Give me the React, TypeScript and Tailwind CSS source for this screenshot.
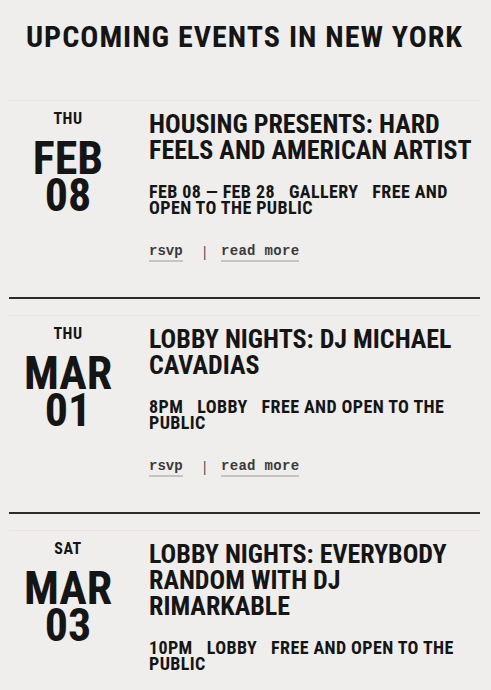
import React from "react";

type Event = {
  day: string;
  month: string;
  date: string;
  title: string;
  meta: string[];
};

const events: Event[] = [
  {
    day: "THU",
    month: "FEB",
    date: "08",
    title: "HOUSING PRESENTS: HARD FEELS AND AMERICAN ARTIST",
    meta: ["FEB 08 — FEB 28", "GALLERY", "FREE AND OPEN TO THE PUBLIC"],
  },
  {
    day: "THU",
    month: "MAR",
    date: "01",
    title: "LOBBY NIGHTS: DJ MICHAEL CAVADIAS",
    meta: ["8PM", "LOBBY", "FREE AND OPEN TO THE PUBLIC"],
  },
  {
    day: "SAT",
    month: "MAR",
    date: "03",
    title: "LOBBY NIGHTS: EVERYBODY RANDOM WITH DJ RIMARKABLE",
    meta: ["10PM", "LOBBY", "FREE AND OPEN TO THE PUBLIC"],
  },
];

function EventRow({ event }: { event: Event }) {
  return (
    <article className="border-b-2 border-[#2b2b2b] pt-[16px] pb-[35px]">
      <div className="border-t border-[#efe3e1] pt-[10px] flex">
        {/* date */}
        <div className="w-[118px] shrink-0 flex flex-col items-center">
          <div className="text-[16px] leading-[16px] font-bold tracking-[0.5px]">{event.day}</div>
          <div className="mt-[13px] text-[46px] leading-[37px] font-bold">{event.month}</div>
          <div className="text-[46px] leading-[37px] font-bold">{event.date}</div>
        </div>
        <div className="ml-[22px] w-[325px]">
          <h2 className="text-[26px] leading-[26px] font-bold">{event.title}</h2>
          <p className="mt-[21px] text-[18px] leading-[16px] font-bold tracking-[0.4px]">
            {event.meta.map((m, i) => (
              <span key={i} className="mr-[14px]">
                {m}
              </span>
            ))}
          </p>
          <div className="mt-[28px] flex items-center font-['Courier_New','Liberation_Mono',monospace] font-stretch-normal text-[14px] leading-[14px] font-bold text-[#3a3a3a]">
            <a className="border-b-2 border-[#c4c4c4] pb-[2px]">rsvp</a>
            <span className="ml-[18px] mr-[12px] font-normal text-[#555]">|</span>
            <a className="border-b-2 border-[#c4c4c4] pb-[2px] tracking-[0.3px]">read more</a>
          </div>
        </div>
      </div>
    </article>
  );
}

export default function App() {
  return (
    <div className="min-h-screen bg-[#efeeec] text-[#151515] font-['Roboto',sans-serif] font-stretch-condensed">
      <h1 className="pt-[22px] pl-[26px] text-[30px] leading-[30px] font-bold tracking-[1px]">
        UPCOMING EVENTS IN NEW YORK
      </h1>
      <div className="mt-[32px] pl-[9px] pr-[11px]">
        {events.map((e, i) => (
          <EventRow key={i} event={e} />
        ))}
      </div>
    </div>
  );
}
